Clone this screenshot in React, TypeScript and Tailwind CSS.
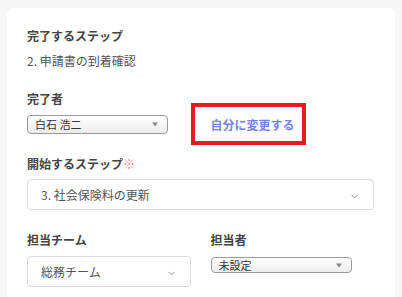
import { ChevronDown } from 'lucide-react';

const font = { fontFamily: '"Noto Sans CJK JP", "Noto Sans", sans-serif' };

function NativeSelect({ value, height }: { value: string; height: string }) {
  return (
    <div
      className={`flex w-[141px] ${height} items-center justify-between rounded-[4px] border border-[#9a9a9a] bg-gradient-to-b from-white to-[#ececec] pl-[7px] pr-[9px] text-[11px] leading-none text-[#333]`}
    >
      <span>{value}</span>
      <svg width="6" height="5" viewBox="0 0 6 5">
        <path d="M0 0.5h6L3 4.5z" fill="#888" />
      </svg>
    </div>
  );
}

function FieldSelect({ value, width }: { value: string; width: string }) {
  return (
    <div
      className={`flex ${width} h-[31px] items-center justify-between rounded-[4px] border border-[#dcdcdc] bg-white pl-[13px] pr-[13px] text-[12px] text-[#555]`}
    >
      <span>{value}</span>
      <ChevronDown size={11} strokeWidth={1.6} className="mt-[3px] text-[#777]" />
    </div>
  );
}

function Label({ children }: { children: React.ReactNode }) {
  return <div className="text-[12px] font-bold leading-[18px] text-[#444]">{children}</div>;
}

export default function App() {
  return (
    <div className="h-[297px] overflow-hidden bg-[#f7f7f7] pl-[7px] pr-[7px] pt-[8px]" style={font}>
      <div className="min-h-[320px] rounded-[6px] bg-white pl-[20px] pr-[21px] pt-[19px]">
        {/* 完了するステップ */}
        <Label>完了するステップ</Label>
        <div className="mt-[7px] text-[12px] leading-[18px] text-[#555]">2. 申請書の到着確認</div>

        {/* 完了者 */}
        <div className="mt-[20px] grid grid-cols-2 gap-x-[20px]">
          <div>
            <Label>完了者</Label>
            <div className="mt-[7px]">
              <NativeSelect value="白石 浩二" height="h-[19px]" />
            </div>
          </div>
          <div className="pt-[25px]">
            <div className="relative flex h-[19px] w-fit items-center">
              <span className="text-[12px] font-bold leading-none text-[#7483e6]">自分に変更する</span>
              <div className="absolute left-[-20px] top-[-12px] h-[42px] w-[115px] border-[4px] border-[#e31b23]" />
            </div>
          </div>
        </div>

        {/* 開始するステップ */}
        <div className="mt-[21px]">
          <Label>
            開始するステップ<span className="text-[#f58a8a]">※</span>
          </Label>
          <div className="mt-[6px]">
            <FieldSelect value="3. 社会保険料の更新" width="w-full" />
          </div>
        </div>

        {/* 担当チーム / 担当者 */}
        <div className="mt-[21px] grid grid-cols-2 gap-x-[20px]">
          <div>
            <Label>担当チーム</Label>
            <div className="mt-[7px]">
              <FieldSelect value="総務チーム" width="w-full" />
            </div>
          </div>
          <div>
            <Label>担当者</Label>
            <div className="mt-[8px]">
              <NativeSelect value="未設定" height="h-[16px]" />
            </div>
          </div>
        </div>
      </div>
    </div>
  );
}
